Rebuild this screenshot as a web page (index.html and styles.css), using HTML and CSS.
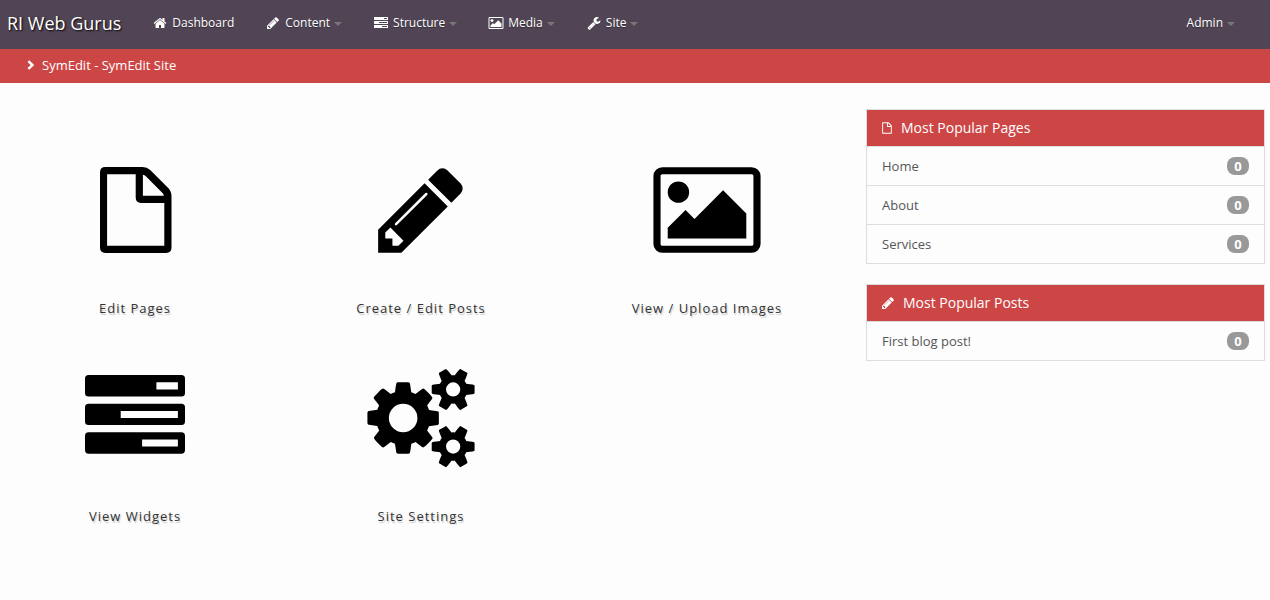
FILE: index.html
```html
<!DOCTYPE html>
<html lang="en">
<head>
<meta charset="utf-8">
<title>SymEdit - SymEdit Site</title>
<link rel="stylesheet" href="styles.css">
</head>
<body>
<svg class="sprite" aria-hidden="true">
  <symbol id="home" viewBox="0 0 1792 1792"><path d="M1472 992v480q0 26-19 45t-45 19h-384v-384h-256v384h-384q-26 0-45-19t-19-45v-480q0-1 .5-3t.5-3l575-474 575 474q1 2 1 6zm223-69l-62 74q-8 9-21 11h-3q-13 0-21-7l-692-577-692 577q-12 8-24 7-13-2-21-11l-62-74q-8-10-7-23.5t11-21.5l719-599q32-26 76-26t76 26l244 204v-195q0-14 9-23t23-9h192q14 0 23 9t9 23v408l219 182q10 8 11 21.5t-7 23.5z"/></symbol>
  <symbol id="pencil" viewBox="0 0 1792 1792"><path d="M491 1536l91-91-235-235-91 91v107h128v128h107zm523-928q0-22-22-22-10 0-17 7l-542 542q-7 7-7 17 0 22 22 22 10 0 17-7l542-542q7-7 7-17zm-54-192l416 416-832 832h-416v-416zm683 96q0 53-37 90l-166 166-416-416 166-165q36-38 90-38 53 0 91 38l235 234q37 39 37 91z"/></symbol>
  <symbol id="wrench" viewBox="0 0 1792 1792"><path d="M448 1472q0-26-19-45t-45-19-45 19-19 45 19 45 45 19 45-19 19-45zm644-420l-682 682q-37 37-90 37-52 0-91-37l-106-108q-38-36-38-90 0-53 38-91l681-681q39 98 114.5 173.5t173.5 114.5zm634-435q0 39-23 106-47 134-164.5 217.5t-258.5 83.5q-185 0-316.5-131.5t-131.5-316.5 131.5-316.5 316.5-131.5q58 0 121.5 16.5t107.5 46.5q16 11 16 28t-16 28l-293 169v224l193 107q5-3 79-48.5t135.5-81 70.5-35.5q15 0 23.5 10t8.5 25z"/></symbol>
  <symbol id="picture" viewBox="-64 0 1920 1792"><path d="M576 576q0 80-56 136t-136 56-136-56-56-136 56-136 136-56 136 56 56 136zm1024 384v448h-1408v-192l320-320 160 160 512-512zm96-704h-1600q-13 0-22.5 9.5t-9.5 22.5v1216q0 13 9.5 22.5t22.5 9.5h1600q13 0 22.5-9.5t9.5-22.5v-1216q0-13-9.5-22.5t-22.5-9.5zm160 32v1216q0 66-47 113t-113 47h-1600q-66 0-113-47t-47-113v-1216q0-66 47-113t113-47h1600q66 0 113 47t47 113z"/></symbol>
  <symbol id="cogs" viewBox="-64 0 1920 1792"><path d="M832 896q0-106-75-181t-181-75-181 75-75 181 75 181 181 75 181-75 75-181zm768 512q0-52-38-90t-90-38-90 38-38 90q0 53 37.5 90.5t90.5 37.5 90.5-37.5 37.5-90.5zm0-1024q0-52-38-90t-90-38-90 38-38 90q0 53 37.5 90.5t90.5 37.5 90.5-37.5 37.5-90.5zm-384 421v185q0 10-7 19.5t-16 10.5l-155 24q-11 35-32 76 34 48 90 115 7 11 7 20 0 12-7 19-23 30-82.5 89.5t-78.5 59.5q-11 0-21-7l-115-90q-37 19-77 31-11 108-23 155-7 24-30 24h-186q-11 0-20-7.5t-10-17.5l-23-153q-34-10-75-31l-118 89q-7 7-20 7-11 0-21-8-144-133-144-160 0-9 7-19 10-14 41-53t47-61q-23-44-35-82l-152-24q-10-1-17-9.5t-7-19.5v-185q0-10 7-19.5t16-10.5l155-24q11-35 32-76-34-48-90-115-7-11-7-20 0-12 7-20 22-30 82-89t79-59q11 0 21 7l115 90q34-18 77-32 11-108 23-154 7-24 30-24h186q11 0 20 7.5t10 17.5l23 153q34 10 75 31l118-89q8-7 20-7 11 0 21 8 144 133 144 160 0 8-7 19-12 16-42 54t-45 60q23 48 34 82l152 23q10 2 17 10.5t7 19.5zm640 533v140q0 16-149 31-12 27-30 52 51 113 51 138 0 4-4 7-122 71-124 71-8 0-46-47t-52-68q-20 2-30 2t-30-2q-14 21-52 68t-46 47q-2 0-124-71-4-3-4-7 0-25 51-138-18-25-30-52-149-15-149-31v-140q0-16 149-31 13-29 30-52-51-113-51-138 0-4 4-7 4-2 35-20t59-34 30-16q8 0 46 46.5t52 67.5q20-2 30-2t30 2q51-71 92-112l6-2q4 0 124 70 4 3 4 7 0 25-51 138 17 23 30 52 149 15 149 31zm0-1024v140q0 16-149 31-12 27-30 52 51 113 51 138 0 4-4 7-122 71-124 71-8 0-46-47t-52-68q-20 2-30 2t-30-2q-14 21-52 68t-46 47q-2 0-124-71-4-3-4-7 0-25 51-138-18-25-30-52-149-15-149-31v-140q0-16 149-31 13-29 30-52-51-113-51-138 0-4 4-7 4-2 35-20t59-34 30-16q8 0 46 46.5t52 67.5q20-2 30-2t30 2q51-71 92-112l6-2q4 0 124 70 4 3 4 7 0 25-51 138 17 23 30 52 149 15 149 31z"/></symbol>
  <symbol id="file" viewBox="0 0 100 100"><path fill-rule="evenodd" d="M20.4 7.1H57.5Q62 7.1 65.5 10.2L83.2 27.9Q86.5 31.5 86.5 36V87.5Q86.5 92.9 81.1 92.9H20.4Q15 92.9 15 87.5V12.5Q15 7.1 20.4 7.1ZM22.1 14.3V85.7H79.3V42.9H56.1Q50.7 42.9 50.7 37.5V14.3ZM57.9 14.7V35.7H78.9Q78.4 33.9 77.5 33L60.6 16.1Q59.7 15.2 57.9 14.7Z"/></symbol>
  <symbol id="tasks" viewBox="0 0 100 100"><path fill-rule="evenodd" d="M3.6 7.1H96.4Q100 7.1 100 10.7V25Q100 28.6 96.4 28.6H3.6Q0 28.6 0 25V10.7Q0 7.1 3.6 7.1ZM71.4 14.3V21.4H92.9V14.3ZM3.6 35.7H96.4Q100 35.7 100 39.3V53.6Q100 57.1 96.4 57.1H3.6Q0 57.1 0 53.6V39.3Q0 35.7 3.6 35.7ZM35.7 42.9V50H92.9V42.9ZM3.6 64.3H96.4Q100 64.3 100 67.9V82.1Q100 85.7 96.4 85.7H3.6Q0 85.7 0 82.1V67.9Q0 64.3 3.6 64.3ZM57.1 71.4V78.6H92.9V71.4Z"/></symbol>
  <symbol id="chevron" viewBox="0 0 8 10"><path d="M2.2.2 7.2 5l-5 4.8L.5 8.1 3.7 5 .5 1.9z"/></symbol>
</svg>

<nav class="navbar">
  <a class="brand" href="#">RI Web Gurus</a>
  <ul class="menu">
    <li><a class="menu-link" href="#"><svg class="icon"><use href="#home"/></svg>Dashboard</a></li>
    <li><a class="menu-link" href="#"><svg class="icon"><use href="#pencil"/></svg>Content<span class="caret"></span></a></li>
    <li><a class="menu-link" href="#"><svg class="icon"><use href="#tasks"/></svg>Structure<span class="caret"></span></a></li>
    <li><a class="menu-link" href="#"><svg class="icon"><use href="#picture"/></svg>Media<span class="caret"></span></a></li>
    <li><a class="menu-link" href="#"><svg class="icon"><use href="#wrench"/></svg>Site<span class="caret"></span></a></li>
  </ul>
  <a class="menu-link account" href="#">Admin<span class="caret"></span></a>
</nav>

<div class="titlebar"><svg class="chevron"><use href="#chevron"/></svg>SymEdit - SymEdit Site</div>

<div class="page">
  <main class="tiles">
    <a class="tile" href="#"><svg class="tile-icon"><use href="#file"/></svg>Edit Pages</a>
    <a class="tile" href="#"><svg class="tile-icon"><use href="#pencil"/></svg>Create / Edit Posts</a>
    <a class="tile" href="#"><svg class="tile-icon"><use href="#picture"/></svg>View / Upload Images</a>
    <a class="tile" href="#"><svg class="tile-icon"><use href="#tasks"/></svg>View Widgets</a>
    <a class="tile" href="#"><svg class="tile-icon"><use href="#cogs"/></svg>Site Settings</a>
  </main>
  <aside class="sidebar">
    <section class="panel">
      <h2 class="panel-title"><svg class="title-icon title-icon-file" viewBox="14 7 74 86"><use href="#file" width="100" height="100"/></svg>Most Popular Pages</h2>
      <ul class="panel-list">
        <li class="row"><a class="row-link" href="#">Home</a><span class="badge">0</span></li>
        <li class="row"><a class="row-link" href="#">About</a><span class="badge">0</span></li>
        <li class="row"><a class="row-link" href="#">Services</a><span class="badge">0</span></li>
      </ul>
    </section>
    <section class="panel">
      <h2 class="panel-title"><svg class="title-icon" viewBox="7 7 86 86"><use href="#pencil" width="100" height="100"/></svg>Most Popular Posts</h2>
      <ul class="panel-list">
        <li class="row"><a class="row-link" href="#">First blog post!</a><span class="badge">0</span></li>
      </ul>
    </section>
  </aside>
</div>
</body>
</html>
```
FILE: styles.css
```css
* {
  box-sizing: border-box;
}

body {
  margin: 0;
  background: #fdfdfd;
  color: #555;
  font: 13px/18px "Open Sans", sans-serif;
}

a {
  color: inherit;
  text-decoration: none;
}

ul {
  margin: 0;
  padding: 0;
  list-style: none;
}

svg {
  fill: currentColor;
}

.sprite {
  display: none;
}

.navbar {
  display: flex;
  align-items: center;
  height: 49px;
  padding: 0 20px 3px 7px;
  background: #514555;
  color: #fff;
}

.brand {
  margin-right: 15px;
  font-size: 18px;
  line-height: 24px;
  text-shadow: 1px 1px 2px #000;
}

.menu {
  display: flex;
}

.menu-link {
  display: flex;
  align-items: center;
  padding: 0 15px;
  font-size: 12px;
  text-shadow: 0 1px 1px rgba(0, 0, 0, 0.4);
}

.account {
  margin-left: auto;
}

.icon {
  width: 18px;
  height: 14px;
  margin-right: 3px;
}

.caret {
  margin: 2px 0 0 4px;
  border: 4px solid transparent;
  border-top-color: #777;
  border-bottom: 0;
}

.titlebar {
  display: flex;
  align-items: center;
  height: 34px;
  padding: 0 27px 2px;
  background: #cd4646;
  color: #fff;
}

.chevron {
  width: 8px;
  height: 10px;
  margin-right: 7px;
}

.page {
  display: grid;
  grid-template-columns: 828fr 399fr;
  gap: 31px;
  align-items: start;
  padding: 26px 5px 0 7px;
}

.tiles {
  display: grid;
  grid-template-columns: repeat(3, 1fr);
  gap: 52px 30px;
  padding-top: 51px;
}

.tile {
  display: flex;
  flex-direction: column;
  align-items: center;
  gap: 39px;
  padding-bottom: 0;
  color: #333;
  letter-spacing: 1px;
  text-shadow: 1px 2px 1px rgba(0, 0, 0, 0.2);
}

.tiles {
  row-gap: 51px;
}

.tile-icon {
  width: 108px;
  height: 100px;
  color: #000;
}

.panel {
  margin-bottom: 20px;
  border: 1px solid #ddd;
}

.panel-title {
  display: flex;
  align-items: center;
  gap: 9px;
  margin: 0;
  padding: 8px 15px;
  background: #cd4646;
  color: #fff;
  font-size: 14px;
  font-weight: 400;
  line-height: 20px;
}

.title-icon {
  width: 12px;
  height: 12px;
}

.title-icon-file {
  width: 10px;
}

.row {
  display: flex;
  align-items: center;
  justify-content: space-between;
  padding: 10px 15px;
  border-top: 1px solid #ddd;
}

.badge {
  min-width: 22px;
  border-radius: 8px;
  background: #999;
  color: #fff;
  font-weight: 700;
  text-align: center;
}
```
